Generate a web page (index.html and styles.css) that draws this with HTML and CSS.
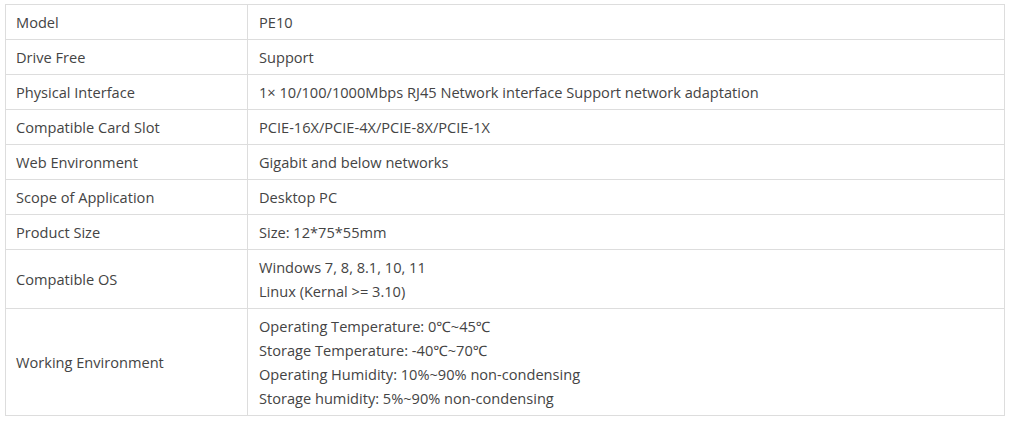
FILE: index.html
```html
<!DOCTYPE html>
<html>
<head>
<meta charset="utf-8">
<link rel="stylesheet" href="styles.css">
</head>
<body>
<table class="spec">
  <tbody>
    <tr><td class="k">Model</td><td class="v">PE10</td></tr>
    <tr><td class="k">Drive Free</td><td class="v">Support</td></tr>
    <tr><td class="k">Physical Interface</td><td class="v">1× 10/100/1000Mbps RJ45 Network interface Support network adaptation</td></tr>
    <tr><td class="k">Compatible Card Slot</td><td class="v">PCIE-16X/PCIE-4X/PCIE-8X/PCIE-1X</td></tr>
    <tr><td class="k">Web Environment</td><td class="v">Gigabit and below networks</td></tr>
    <tr><td class="k">Scope of Application</td><td class="v">Desktop PC</td></tr>
    <tr><td class="k">Product Size</td><td class="v">Size: 12*75*55mm</td></tr>
    <tr><td class="k">Compatible OS</td><td class="v">Windows 7, 8, 8.1, 10, 11<br>Linux (Kernal &gt;= 3.10)</td></tr>
    <tr><td class="k">Working Environment</td><td class="v">Operating Temperature: 0℃~45℃<br>Storage Temperature: -40℃~70℃<br>Operating Humidity: 10%~90% non-condensing<br>Storage humidity: 5%~90% non-condensing</td></tr>
  </tbody>
</table>
</body>
</html>
```

FILE: styles.css
```css
html, body {
  background: #fff;
}
body {
  margin: 4px 5px;
  font-family: "Open Sans", "Noto Sans", sans-serif;
  font-size: 14.6px;
  color: #444;
}
.spec {
  width: 1000px;
  border-collapse: collapse;
  border: 1px solid #ddd;
}
.spec td {
  border: 1px solid #ddd;
  padding: 5px 10px;
  line-height: 24px;
  vertical-align: middle;
  text-align: left;
}
.spec td.k {
  width: 221px;
}
.spec td.v {
  padding-left: 11px;
}
```
